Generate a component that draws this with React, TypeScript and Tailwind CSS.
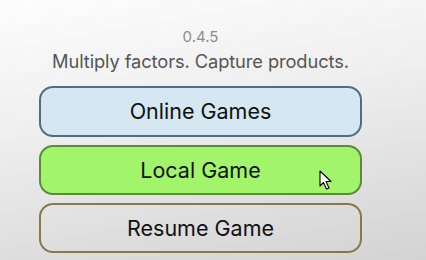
import React from "react";

export default function App() {
  return (
    <div
      className="relative w-[426px] h-[260px] overflow-hidden bg-[linear-gradient(170deg,#fdfdfd_0%,#efefef_40%,#d3d3d3_100%)]"
      style={{ fontFamily: "Inter, 'Noto Sans', sans-serif" }}
    >
      <div className="ml-[39px] w-[323px] flex flex-col items-center">
        <div className="mt-[28px] text-[15px] leading-[18px] text-[#8c8c8c]">0.4.5</div>
        <div className="mt-[3px] text-[18.3px] leading-[24px] text-[#555555] tracking-[-0.1px]">
          Multiply factors. Capture products.
        </div>
        <div className="mt-[13px] w-full flex flex-col gap-[8px]">
          <div className="h-[51px] rounded-[14px] border-2 border-[#4b6f84] bg-[#d5e8f1] flex items-center justify-center text-[21.5px] text-[#111]">
            Online Games
          </div>
          <div className="h-[50px] rounded-[14px] border-2 border-[#5b8a3c] bg-[#a2f56b] flex items-center justify-center text-[21.5px] text-[#111]">
            Local Game
          </div>
          <div className="h-[50px] rounded-[14px] border-2 border-[#857a4c] bg-transparent flex items-center justify-center text-[21.5px] text-[#111]">
            Resume Game
          </div>
        </div>
      </div>
      <svg
        className="absolute left-[319px] top-[170px]"
        width="16"
        height="22"
        viewBox="0 0 16 22"
      >
        <path
          d="M1 1 L1 16 L4.5 12.5 L7.5 19 L10 18 L7 11.5 L12 11.5 Z"
          fill="#ffffff"
          stroke="#000000"
          strokeWidth="1.1"
          strokeLinejoin="round"
        />
      </svg>
    </div>
  );
}
